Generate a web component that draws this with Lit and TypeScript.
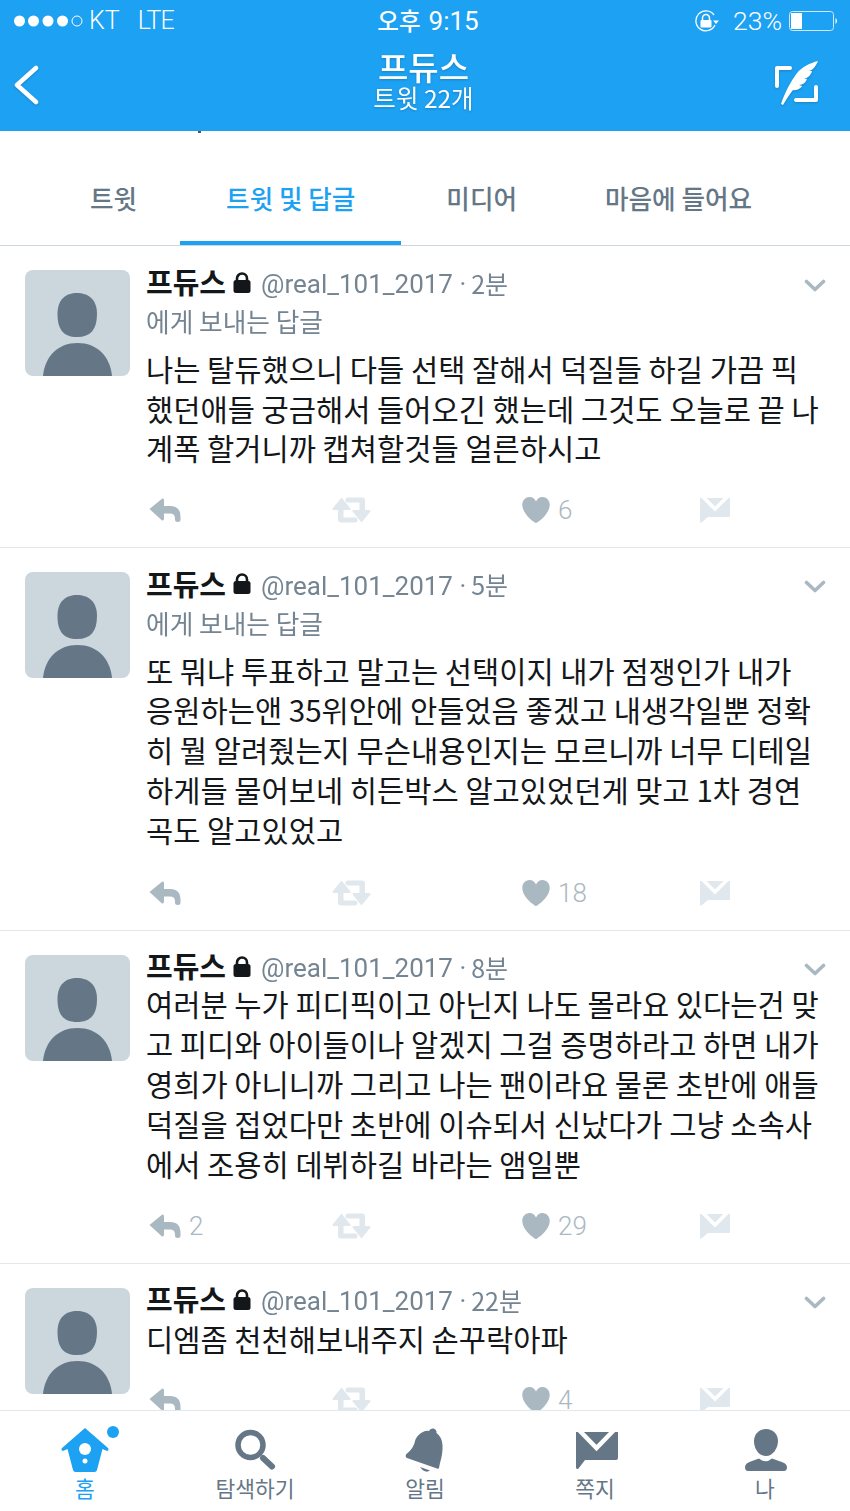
import { LitElement, html, css } from "lit";
import { customElement } from "lit/decorators.js";

const avatar = html`<svg class="avatar" viewBox="0 0 105 106"><rect width="105" height="106" rx="8" fill="#ccd6dd"/><path d="M52 23C41 23 32.500 29 32.500 44C32.500 59 38 67 52 67C66 67 72 59 72 44C72 29 63 23 52 23Z" fill="#657786"/><path d="M18 106C20 86 33 73 52.500 73C72 73 85 86 87 106Z" fill="#657786"/></svg>`;
const lock = html`<svg class="lock" viewBox="0 0 18 21"><path d="M4 9V6.500a5 5 0 0 1 10 0V9" fill="none" stroke="#14171a" stroke-width="2.600"/><rect x="0.500" y="8" width="17" height="13" rx="2.500" fill="#14171a"/></svg>`;
const chevron = html`<svg class="chev" viewBox="0 0 22 14"><path d="M2.500 2.500L11 10.500L19.500 2.500" fill="none" stroke="#aab8c2" stroke-width="3.600" stroke-linecap="round" stroke-linejoin="round"/></svg>`;
const replyIcon = html`<svg class="a-reply" viewBox="0 0 32 24"><path d="M13 0.800L0.500 11L13 22.500Q15 23 15 20.500V15.500H21Q26 15.500 26 20.500V21.500Q26 24 28.800 24Q31.500 24 31.500 21.500V19Q31.500 8 21 8H15V2.500Q15 0 13 0.800Z" fill="#aab8c2"/></svg>`;
const rtIcon = html`<svg class="a-rt" viewBox="0 0 39 26"><g fill="#e1e8ed"><path d="M9.500 0.500L0.500 11.500Q0 13 2 13H6V22.500Q6 25.500 9 25.500H23Q25.500 25.500 25.500 23Q25.500 20.500 23 20.500H11.500V13H17Q19 13 18.500 11.500Z"/><path d="M29.500 25.500L38.500 14.500Q39 13 37 13H33V3.500Q33 0.500 30 0.500H16Q13.500 0.500 13.500 3Q13.500 5.500 16 5.500H27.500V13H22Q20 13 20.500 14.500Z"/></g></svg>`;
const heartIcon = html`<svg class="a-heart" viewBox="0 0 28 26"><path d="M14 26C13 26 1 18 0.300 8.500C0 3.500 3.500 0 7.500 0C10.500 0 13 2 14 4.500C15 2 17.500 0 20.500 0C24.500 0 28 3.500 27.700 8.500C27 18 15 26 14 26Z" fill="#aab8c2"/></svg>`;
const dmIcon = html`<svg class="a-dm" viewBox="0 0 30 26"><path d="M0 1H30V19Q30 20 29 20H8L1.500 25.500Q0 26 0 24.500Z" fill="#e1e8ed"/><path d="M1 -2L15 12L29 -2" fill="none" stroke="#fff" stroke-width="3.500"/></svg>`;

const tweets = [
  { time: "2분", reply: true, gap: 9, lh: 39.5, end: 22, lines: ["나는 탈듀했으니 다들 선택 잘해서 덕질들 하길 가끔 픽", "했던애들 궁금해서 들어오긴 했는데 그것도 오늘로 끝 나", "계폭 할거니까 캡쳐할것들 얼른하시고"], rc: "", like: "6" },
  { time: "5분", reply: true, gap: 9, lh: 39.8, end: 24, lines: ["또 뭐냐 투표하고 말고는 선택이지 내가 점쟁인가 내가", "응원하는앤 35위안에 안들었음 좋겠고 내생각일뿐 정확", "히 뭘 알려줬는지 무슨내용인지는 모르니까 너무 디테일", "하게들 물어보네 히든박스 알고있었던게 맞고 1차 경연", "곡도 알고있었고"], rc: "", like: "18" },
  { time: "8분", reply: false, gap: -2, lh: 40, end: 22, lines: ["여러분 누가 피디픽이고 아닌지 나도 몰라요 있다는건 맞", "고 피디와 아이들이나 알겠지 그걸 증명하라고 하면 내가", "영희가 아니니까 그리고 나는 팬이라요 물론 초반에 애들", "덕질을 접었다만 초반에 이슈되서 신났다가 그냥 소속사", "에서 조용히 데뷔하길 바라는 앰일뿐"], rc: "2", like: "29" },
  { time: "22분", reply: false, gap: 0, lh: 40, end: 21, lines: ["디엠좀 천천해보내주지 손꾸락아파"], rc: "", like: "4" },
];

@customElement("app-root")
export class AppRoot extends LitElement {
  static styles = css`
    :host { display: block; width: 850px; height: 1511px; background: #fff; font-family: "Noto Sans CJK KR", "Noto Sans", sans-serif; overflow: hidden; }
    .page { position: relative; height: 1511px; display: flex; flex-direction: column; }
    header { background: #1da1f2; color: #fff; height: 131px; flex: none; display: flex; flex-direction: column; }
    .status { height: 41px; display: grid; grid-template-columns: 1fr auto 1fr; align-items: center; padding: 0 14px; font-family: Roboto, sans-serif; font-weight: 300; font-size: 25px; }
    .st-left { display: flex; align-items: center; }
    .dots { width: 70px; height: 12px; margin-right: 5px; }
    .lte { margin-left: 18px; letter-spacing: -1px; }
    .time { font-family: "Noto Sans CJK KR", sans-serif; font-weight: 500; font-size: 23.500px; padding-left: 6px; display: flex; align-items: baseline; gap: 8px; line-height: 30px; }
    .time b { font-family: Roboto, sans-serif; font-weight: 400; font-size: 26px; }
    .st-right { display: flex; align-items: center; justify-content: flex-end; font-size: 26.500px; }
    .rot { width: 26px; height: 22px; margin-right: 13px; }
    .batt { width: 48px; height: 20px; margin-left: 7px; margin-right: -1px; }
    .nav { flex: 1; display: grid; grid-template-columns: 80px 1fr 80px; align-items: center; filter: drop-shadow(0 1px 1px rgba(0,0,0,0.18)); margin-top: -3px; }
    .back { width: 28px; height: 40px; margin-left: 14px; }
    .compose { width: 48px; height: 48px; justify-self: end; margin-right: 30px; margin-bottom: 3px; }
    .title { text-align: center; padding-right: 3px; padding-bottom: 12px; }
    .title .t1 { font-size: 33px; font-weight: 500; line-height: 38px; }
    .title .t2 { font-size: 24.500px; line-height: 26px; font-weight: 400; }
    .speck { position: absolute; left: 198px; top: 131px; width: 3px; height: 2px; background: #555; }
    .tabs { height: 115px; flex: none; box-sizing: border-box; border-bottom: 1px solid #ccd6dd; display: flex; padding-left: 43px; font-size: 25.600px; font-weight: 500; color: #657786; }
    .tab { padding: 42px 45px 22px; display: flex; align-items: center; height: 114px; box-sizing: border-box; white-space: nowrap; line-height: 30px; }
    .tab:first-child { padding-left: 47px; padding-right: 43px; }
    .tab:nth-child(3) { padding-right: 43px; }
    .tab.on { color: #1da1f2; box-shadow: inset 0 -4px 0 #1da1f2; padding-left: 46px; padding-right: 46px; }
    .timeline { flex: 1; min-height: 0; overflow: hidden; }
    .tweet { display: flex; border-bottom: 1px solid #e1e8ed; padding: 0 0 0 25px; box-sizing: border-box; }
    .avatar { width: 105px; height: 106px; flex: none; margin-top: 24px; margin-right: 16px; }
    .content { flex: 1; min-width: 0; padding-top: 18px; padding-bottom: 17px; }
    .tweet.plain .content { padding-top: 17px; }
    .head { height: 38px; display: flex; align-items: center; white-space: nowrap; }
    .name { font-size: 29px; font-weight: 700; color: #14171a; line-height: 38px; margin-top: -4px; }
    .lock { width: 18px; height: 21px; margin-left: 7px; margin-right: 10px; margin-bottom: 2px; }
    .handle { font-family: Roboto, sans-serif; font-size: 26px; color: #657786; opacity: 0.9; display: flex; align-items: center; gap: 5px; padding-top: 2px; }
    .handle span { font-family: "Noto Sans CJK KR", sans-serif; font-size: 25px; margin-top: -3px; }
    .chev { width: 22px; height: 14px; margin-left: auto; margin-right: 24px; margin-top: 5px; }
    .replyto { height: 38px; line-height: 38px; font-size: 25.700px; color: #657786; opacity: 0.9; }
    .body { font-size: 29.600px; color: #14171a; white-space: nowrap; }
    .actions { display: grid; grid-template-columns: 183px 190px 178px auto; padding-left: 3px; height: 40px; align-items: center; font-family: Roboto, sans-serif; font-weight: 300; font-size: 26px; color: #aab8c2; }
    .act { display: flex; align-items: center; gap: 8px; }
    .a-reply { width: 32px; height: 24px; }
    .a-rt { width: 39px; height: 26px; }
    .a-heart { width: 28px; height: 26px; }
    .a-dm { width: 30px; height: 26px; }
    nav.bar { height: 101px; flex: none; box-sizing: border-box; border-top: 1px solid #e1e8ed; background: #fff; display: grid; grid-template-columns: repeat(5, 1fr); }
    .item { display: flex; flex-direction: column; align-items: center; padding-top: 16px; color: #657786; font-size: 21.500px; line-height: 30px; position: relative; }
    .item svg { width: 60px; height: 48px; margin-bottom: -2px; }
    .item.on { color: #1da1f2; }
    .badge { position: absolute; left: 107px; top: 15px; width: 12px; height: 12px; border-radius: 50%; background: #1da1f2; }
  `;

  render() {
    return html`<div class="page">
      <header>
        <div class="status">
          <div class="st-left">
            <svg class="dots" viewBox="0 0 70 12"><g fill="#fff"><circle cx="5.500" cy="6" r="5.500"/><circle cx="19.500" cy="6" r="5.500"/><circle cx="34" cy="6" r="5.500"/><circle cx="48.500" cy="6" r="5.500"/></g><circle cx="63" cy="6" r="5" fill="none" stroke="#fff"/></svg>
            <span>KT</span><span class="lte">LTE</span>
          </div>
          <div class="time"><span>오후</span><b>9:15</b></div>
          <div class="st-right">
            <svg class="rot" viewBox="0 0 26 22"><path d="M20 5A10 10 0 1 0 21 15" fill="none" stroke="#fff" stroke-width="1.300"/><path d="M19 10.500H25L22 14Z" fill="#fff"/><path d="M8.500 10V8a3.500 3.500 0 0 1 7 0V10" fill="none" stroke="#fff" stroke-width="1.500"/><rect x="6.500" y="10" width="11" height="7.500" rx="1" fill="#fff"/></svg>
            <span>23%</span>
            <svg class="batt" viewBox="0 0 48 20"><rect x="0.500" y="0.500" width="44" height="19" rx="3" fill="none" stroke="#cfe9fb"/><rect x="2" y="2" width="11" height="16" fill="#fff"/><path d="M46.500 7Q48 8 48 10Q48 12 46.500 13Z" fill="#fff"/></svg>
          </div>
        </div>
        <div class="nav">
          <svg class="back" viewBox="0 0 28 40"><path d="M22 3L3 20L22 37" fill="none" stroke="#fff" stroke-width="4.500" stroke-linecap="round" stroke-linejoin="round"/></svg>
          <div class="title"><div class="t1">프듀스</div><div class="t2">트윗 22개</div></div>
          <svg class="compose" viewBox="0 0 48 48"><path d="M18 9H5V27M24 41H44V28" fill="none" stroke="#fff" stroke-width="4" stroke-linecap="round" stroke-linejoin="round"/><path d="M46 2C38 4 30 8 25 14C19 22 13 33 9 45L11 46C14 41 17 36 21 31C25 32 29 29 30 27L27 26C31 26 34 23 35 20L32 20C36 19 39 16 40 12L37 12C41 11 44 7 46 2Z" fill="#fff"/></svg>
        </div>
      </header>
      <div class="speck"></div>
      <div class="tabs">
        <div class="tab">트윗</div><div class="tab on">트윗 및 답글</div><div class="tab">미디어</div><div class="tab">마음에 들어요</div>
      </div>
      <div class="timeline">
        ${tweets.map((t) => html`<article class="tweet ${t.reply ? "" : "plain"}">
          ${avatar}
          <div class="content">
            <div class="head"><span class="name">프듀스</span>${lock}<div class="handle">@real_101_2017 · <span>${t.time}</span></div>${chevron}</div>
            ${t.reply ? html`<div class="replyto">에게 보내는 답글</div>` : ""}
            <div class="body" style="margin-top:${t.gap}px;line-height:${t.lh}px">${t.lines.map((l) => html`<div>${l}</div>`)}</div>
            <div class="actions" style="margin-top:${t.end}px">
              <div class="act">${replyIcon}${t.rc}</div>
              <div class="act">${rtIcon}</div>
              <div class="act">${heartIcon}${t.like}</div>
              <div class="act">${dmIcon}</div>
            </div>
          </div>
        </article>`)}
      </div>
      <nav class="bar">
        <div class="item on"><svg viewBox="0 0 60 48"><path d="M30 1L53 21Q54.500 23 52 24L47.500 22L42 43Q41.500 45 39.500 45H20.500Q18.500 45 18 43L12.500 22L8 24Q5.500 23 7 21Z" fill="#1da1f2"/><circle cx="30" cy="22" r="6" fill="#fff"/><circle cx="30" cy="34" r="2.500" fill="#fff"/></svg>홈<span class="badge"></span></div>
        <div class="item"><svg viewBox="0 0 60 48"><circle cx="25.500" cy="18" r="12.500" fill="none" stroke="#657786" stroke-width="5.500"/><path d="M38 31L47 39.500" stroke="#657786" stroke-width="6" stroke-linecap="round"/></svg>탐색하기</div>
        <div class="item"><svg viewBox="0 0 60 48"><path d="M26 6Q31 3 34 4Q35 1 38.500 1.500Q42 2.500 41.500 6Q47 10 47.500 18Q48 26 45 36L44 41Q43.500 42 42 41.500L12 31Q10 30 11 27.500Q19 21 20 14Q21.500 9 26 6Z" fill="#657786"/><path d="M25 40L35 43.500Q30 47 25 40Z" fill="#657786"/></svg>알림</div>
        <div class="item"><svg viewBox="0 0 60 48"><path d="M11 5H53V31Q53 33 51 33H20L13.500 41.500Q11 43 11 40Z" fill="#657786"/><path d="M13 2L31.500 21L50 2" fill="none" stroke="#fff" stroke-width="4.500"/></svg>쪽지</div>
        <div class="item"><svg viewBox="0 0 60 48"><path d="M31 2C24 2 19 7 19 14C19 21 23 29 31 29C38 29 43 21 43 14C43 7 38 2 31 2Z" fill="#657786"/><path d="M13 44Q10 44 10 40Q10 36 17 34L24 31.500Q30.500 37 37 31.500L44 34Q52 36 52 40Q52 44 49 44Z" fill="#657786"/></svg>나</div>
      </nav>
    </div>`;
  }
}
